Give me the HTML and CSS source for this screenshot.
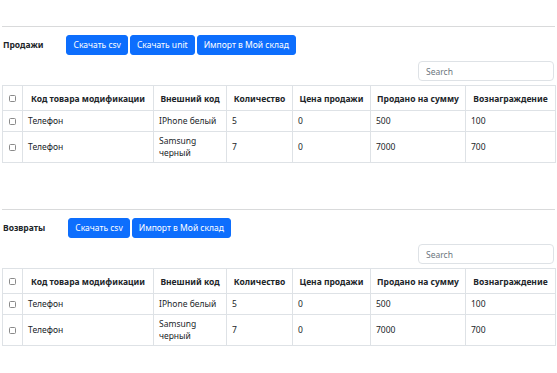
FILE: index.html
```html
<!DOCTYPE html>
<html lang="ru">
<head>
<meta charset="utf-8">
<link rel="stylesheet" href="styles.css">
</head>
<body>
<div class="page">
  <section class="block">
    <hr class="rule">
    <div class="toolbar">
      <h2 class="title">Продажи</h2>
      <div class="btns">
        <button class="btn">Скачать csv</button>
        <button class="btn">Скачать unit</button>
        <button class="btn">Импорт в Мой склад</button>
      </div>
    </div>
    <div class="search-row"><input class="search" type="text" placeholder="Search"></div>
    <table class="grid">
      <colgroup>
        <col class="c-chk"><col class="c-code"><col class="c-ext"><col class="c-qty"><col class="c-price"><col class="c-sum"><col class="c-fee">
      </colgroup>
      <thead>
        <tr><th><span class="chk"></span></th><th>Код товара модификации</th><th>Внешний код</th><th>Количество</th><th>Цена продажи</th><th>Продано на сумму</th><th>Вознаграждение</th></tr>
      </thead>
      <tbody>
        <tr><td class="chk-cell"><span class="chk"></span></td><td>Телефон</td><td>IPhone белый</td><td>5</td><td>0</td><td>500</td><td>100</td></tr>
        <tr><td class="chk-cell"><span class="chk"></span></td><td>Телефон</td><td>Samsung<br>черный</td><td>7</td><td>0</td><td>7000</td><td>700</td></tr>
      </tbody>
    </table>
  </section>
  <section class="block second">
    <hr class="rule">
    <div class="toolbar">
      <h2 class="title">Возвраты</h2>
      <div class="btns">
        <button class="btn">Скачать csv</button>
        <button class="btn">Импорт в Мой склад</button>
      </div>
    </div>
    <div class="search-row"><input class="search" type="text" placeholder="Search"></div>
    <table class="grid">
      <colgroup>
        <col class="c-chk"><col class="c-code"><col class="c-ext"><col class="c-qty"><col class="c-price"><col class="c-sum"><col class="c-fee">
      </colgroup>
      <thead>
        <tr><th><span class="chk"></span></th><th>Код товара модификации</th><th>Внешний код</th><th>Количество</th><th>Цена продажи</th><th>Продано на сумму</th><th>Вознаграждение</th></tr>
      </thead>
      <tbody>
        <tr><td class="chk-cell"><span class="chk"></span></td><td>Телефон</td><td>IPhone белый</td><td>5</td><td>0</td><td>500</td><td>100</td></tr>
        <tr><td class="chk-cell"><span class="chk"></span></td><td>Телефон</td><td>Samsung<br>черный</td><td>7</td><td>0</td><td>7000</td><td>700</td></tr>
      </tbody>
    </table>
  </section>
</div>
</body>
</html>
```

FILE: styles.css
```css
* { box-sizing: border-box; }
html, body { margin: 0; padding: 0; background: #fff; }
body {
  font-family: "Noto Sans", "Open Sans", sans-serif;
  font-size: 8.5px;
  line-height: 12px;
  color: #212529;
}
.page { padding: 0 2px; }
.block { display: flex; flex-direction: column; }
.second { margin-top: 46px; }
.rule {
  margin: 26px 0 0;
  border: 0;
  border-top: 1px solid #d9dadb;
  height: 0;
}
.second .rule { margin-top: 0; }
.toolbar {
  display: flex;
  align-items: center;
  margin-top: 8px;
  height: 20px;
}
.title {
  margin: 0 23px 0 1px;
  font-size: 8.5px;
  font-weight: 700;
  line-height: 12px;
}
.btns { display: flex; gap: 2px; }
.btn {
  height: 20px;
  padding: 0 6px;
  border: 1px solid #0d6efd;
  border-radius: 3px;
  background: #0d6efd;
  color: #fff;
  font-family: inherit;
  font-size: 8.5px;
  line-height: 12px;
}
.search-row {
  display: flex;
  justify-content: flex-end;
  margin-top: 6px;
  padding-right: 1px;
}
.search {
  width: 136px;
  height: 20px;
  border: 1px solid #dee2e6;
  border-radius: 4px;
  padding: 0 7px;
  font-family: inherit;
  font-size: 8.5px;
  color: #212529;
  outline: none;
}
.search::placeholder { color: #6c757d; }
.grid {
  margin-top: 4px;
  width: 553px;
  table-layout: fixed;
  border-collapse: collapse;
  border: 1px solid #dee2e6;
}
.c-chk { width: 20px; }
.c-code { width: 131px; }
.c-ext { width: 73px; }
.c-qty { width: 66px; }
.c-price { width: 78px; }
.c-sum { width: 95px; }
.c-fee { width: 90px; }
.grid th, .grid td {
  border: 1px solid #dee2e6;
  text-align: left;
  vertical-align: middle;
}
.grid th {
  height: 25px;
  padding: 5px 4px 3px;
  font-weight: 700;
  text-align: center;
  white-space: nowrap;
}
.grid td {
  padding: 3px 4px 3px 5px;
  height: 21px;
}
.grid td.chk-cell, .grid th:first-child { padding: 0; text-align: center; }
.chk {
  display: inline-block;
  width: 7px;
  height: 7px;
  border: 1px solid #8a8a8a;
  border-radius: 1.5px;
  vertical-align: middle;
}
```
